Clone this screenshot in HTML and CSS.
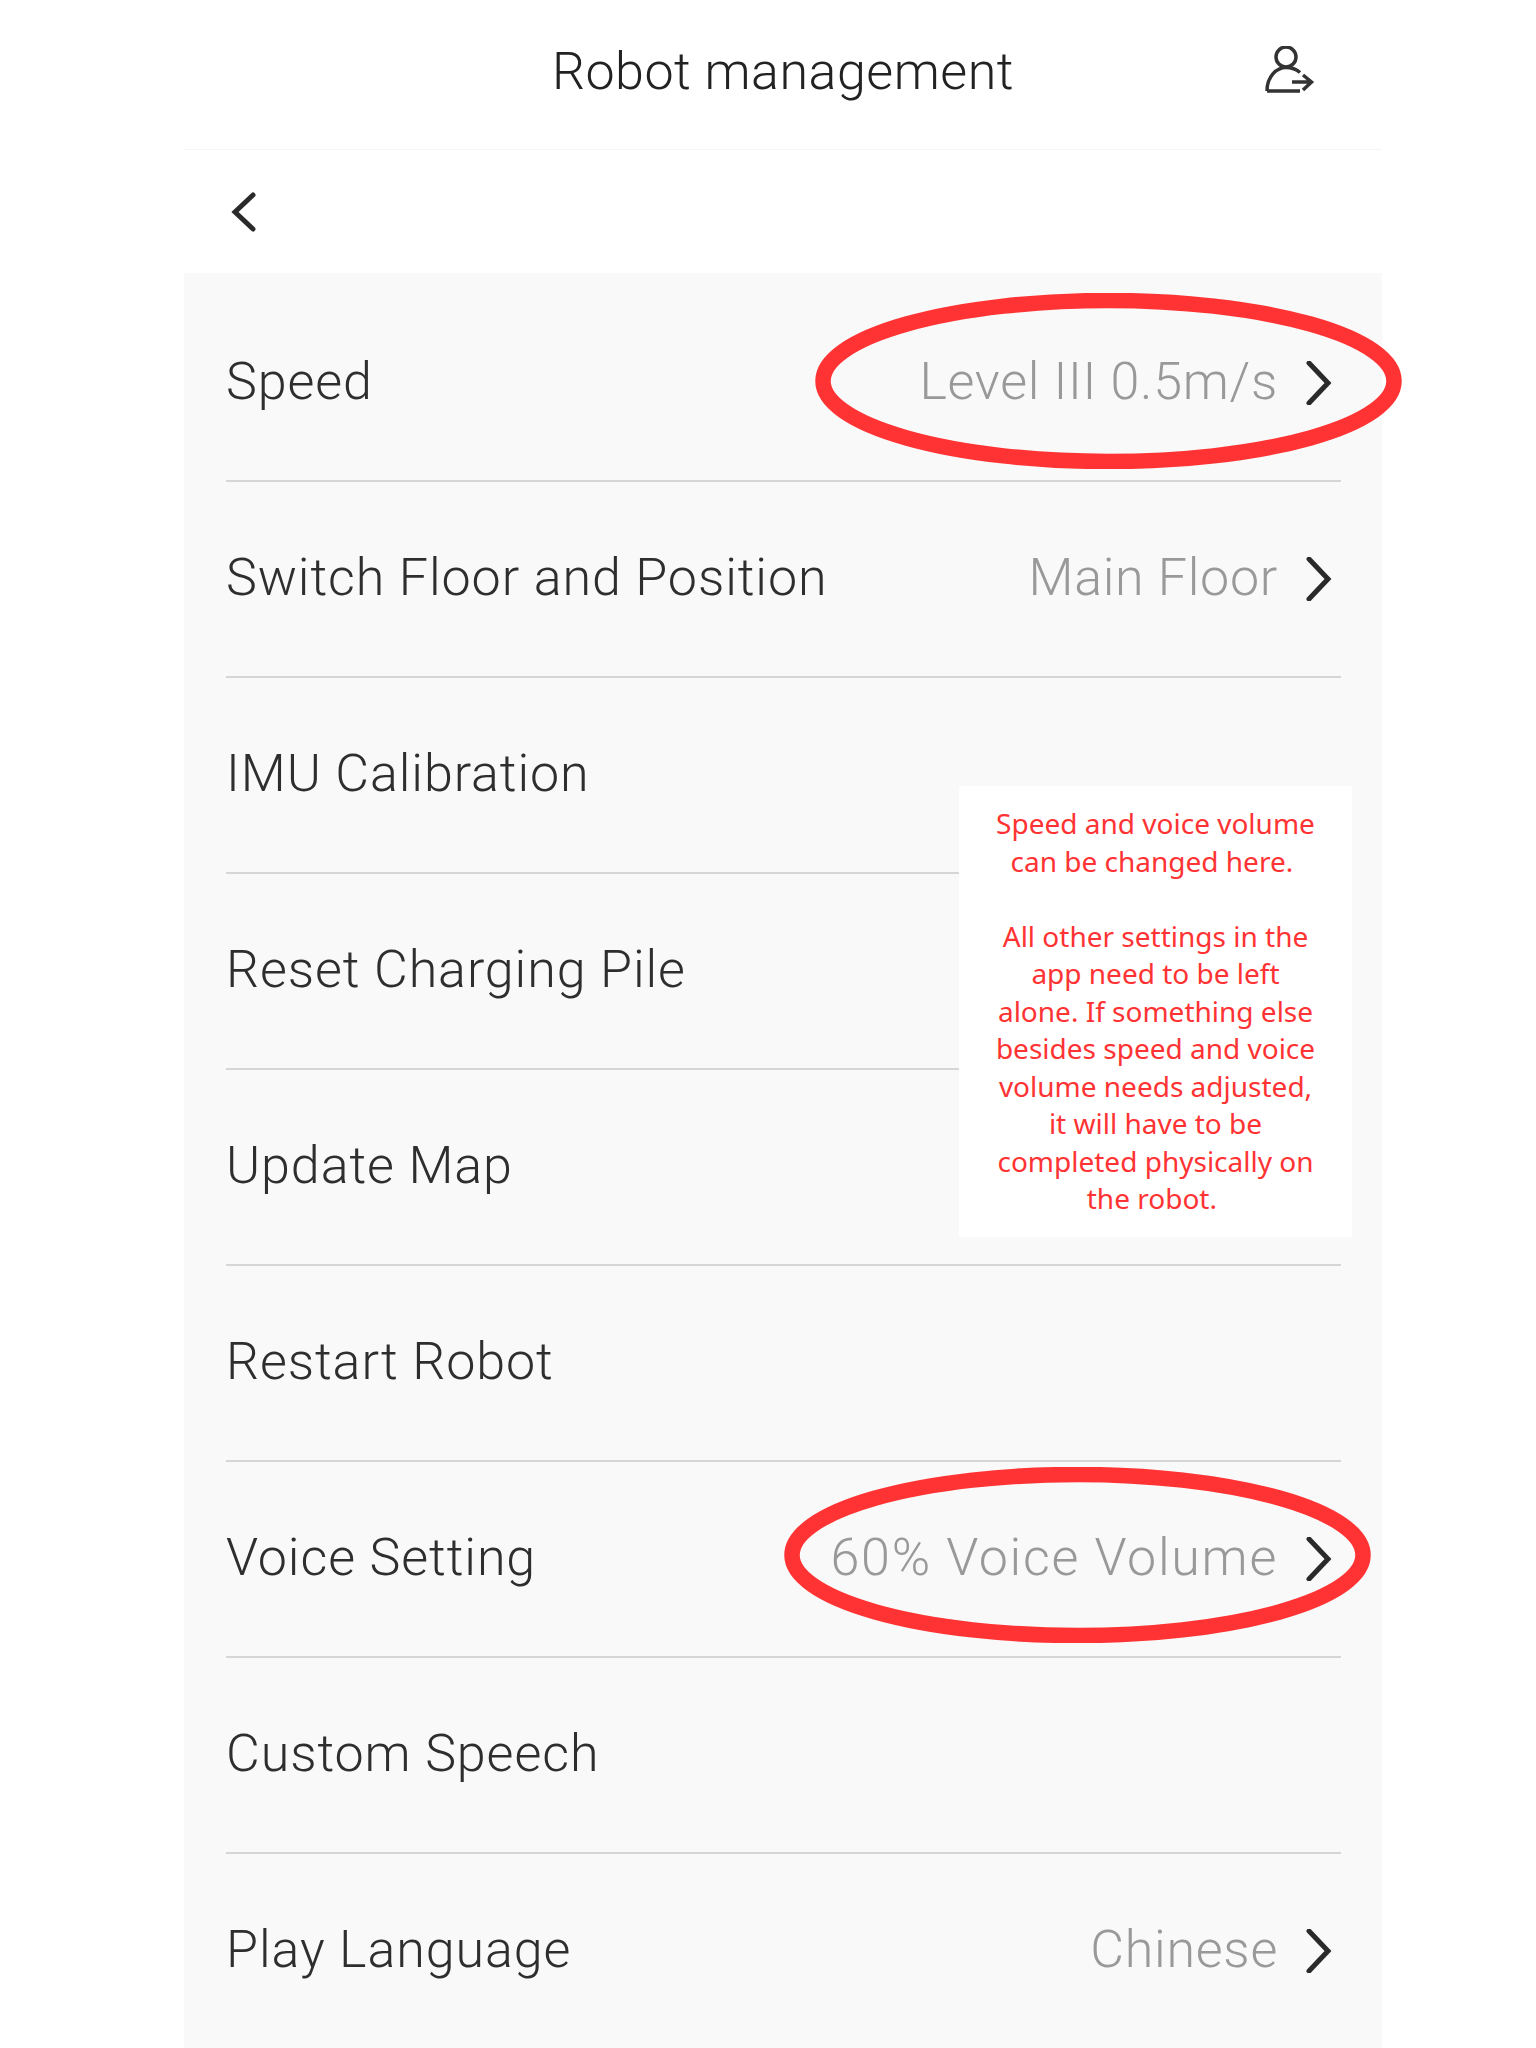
FILE: index.html
```html
<!DOCTYPE html>
<html lang="en">
<head>
<meta charset="UTF-8" />
<meta name="viewport" content="width=device-width, initial-scale=1" />
<title>Robot management</title>
<link rel="stylesheet" href="styles.css">
</head>
<body>

<div class="panel">
  <header class="topbar">
    <h1 class="title">Robot management</h1>
    <svg class="logout" viewBox="0 0 50 50" width="50" height="50">
      <circle cx="21" cy="11" r="10" />
      <path d="M2 45 C2 30 12 21.5 21 21.5 C26 21.5 31 23 35 26.5 M2 45 H35" />
      <path d="M27 36 H46 M38 29 L46.500 36 L38 44" />
    </svg>
  </header>

  <div class="backbar">
    <svg class="chev back" viewBox="0 0 26 40" width="26" height="40"><path d="M23 3 L5 20 L23 37" /></svg>
  </div>

  <div class="list">
    <div class="row">
      <span class="label">Speed</span>
      <span class="value">Level III 0.5m/s</span>
      <svg class="chev" viewBox="0 0 26 44" width="26" height="44"><path d="M3 2 L22 22 L3 42" /></svg>
    </div>
    <div class="row">
      <span class="label">Switch Floor and Position</span>
      <span class="value">Main Floor</span>
      <svg class="chev" viewBox="0 0 26 44" width="26" height="44"><path d="M3 2 L22 22 L3 42" /></svg>
    </div>
    <div class="row"><span class="label">IMU Calibration</span></div>
    <div class="row"><span class="label">Reset Charging Pile</span></div>
    <div class="row"><span class="label">Update Map</span></div>
    <div class="row"><span class="label">Restart Robot</span></div>
    <div class="row">
      <span class="label">Voice Setting</span>
      <span class="value value-wide">60% Voice Volume</span>
      <svg class="chev" viewBox="0 0 26 44" width="26" height="44"><path d="M3 2 L22 22 L3 42" /></svg>
    </div>
    <div class="row"><span class="label">Custom Speech</span></div>
    <div class="row row-last">
      <span class="label">Play Language</span>
      <span class="value">Chinese</span>
      <svg class="chev" viewBox="0 0 26 44" width="26" height="44"><path d="M3 2 L22 22 L3 42" /></svg>
    </div>

    <div class="note">
      <p>Speed and voice volume<br>can be changed here.&nbsp;</p>
      <p>All other settings in the<br>app need to be left<br>alone. If something else<br>besides speed and voice<br>volume needs adjusted,<br>it will have to be<br>completed physically on<br>the robot.&nbsp;</p>
    </div>

    <svg class="ring ring-speed" viewBox="0 0 587 176" width="587" height="176"><ellipse cx="293.500" cy="88" rx="285.500" ry="80.500" /></svg>
    <svg class="ring ring-voice" viewBox="0 0 587 176" width="587" height="176"><ellipse cx="293.500" cy="88" rx="285.500" ry="80.500" /></svg>
  </div>
</div>

</body>
</html>
```

FILE: styles.css
```css
body, html {
  margin: 0;
  padding: 0;
  height: 2048px;
  overflow: hidden;
  background: white;
  font-family: Roboto, "Liberation Sans", sans-serif;
}

.panel {
  width: 1198px;
  margin-left: 184px;
}

.topbar {
  height: 149px;
  display: flex;
  justify-content: center;
  align-items: center;
  border-bottom: 1px solid #f5f5f5;
  position: relative;
}

.title {
  margin: 0 0 6px;
  font-size: 52px;
  font-weight: 300;
  letter-spacing: 0.5px;
  color: #222;
}

.logout {
  position: absolute;
  left: 1081px;
  top: 46px;
  fill: none;
  stroke: #333;
  stroke-width: 3.5;
}

.backbar {
  height: 123px;
  display: flex;
  align-items: center;
  padding-left: 46px;
}

.chev {
  fill: none;
  stroke: #2a2a2a;
  stroke-width: 5;
  stroke-linecap: round;
  margin-left: 28px;
  margin-right: 9px;
}

.chev.back {
  margin: 0;
}

.list {
  position: relative;
  background: #f9f9f9;
  padding: 13px 41px 0 42px;
  height: 1762px;
}

.row {
  height: 194px;
  display: flex;
  align-items: center;
  border-bottom: 2px solid #d6d6d6;
}

.row-last {
  border-bottom: none;
}

.label {
  flex: 1;
  margin-bottom: 3px;
  font-size: 52px;
  font-weight: 300;
  letter-spacing: 0.9px;
  color: #2e2e2e;
}

.value {
  margin-bottom: 3px;
  font-size: 52px;
  font-weight: 300;
  letter-spacing: 0.7px;
  color: #999;
}

.value-wide {
  letter-spacing: 1.7px;
}

.note {
  position: absolute;
  left: 775px;
  top: 513px;
  width: 393px;
  height: 451px;
  background: white;
  padding-top: 19px;
  box-sizing: border-box;
  text-align: center;
  font-family: "Noto Sans", sans-serif;
  font-size: 28px;
  line-height: 37.5px;
  color: #ff3333;
}

.note p {
  margin: 0 0 37.5px;
}

.ring {
  position: absolute;
  fill: none;
  stroke: #ff3333;
  stroke-width: 15.5;
}

.ring-speed {
  left: 631px;
  top: 20px;
}

.ring-voice {
  left: 600px;
  top: 1194px;
}
```
